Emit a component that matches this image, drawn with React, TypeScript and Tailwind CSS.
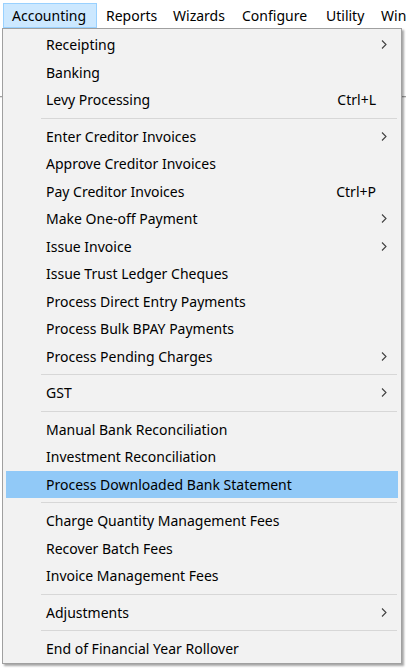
import React from 'react';

type Item =
  | { kind: 'item'; label: string; shortcut?: string; sub?: boolean; active?: boolean }
  | { kind: 'sep' };

const items: Item[] = [
  { kind: 'item', label: 'Receipting', sub: true },
  { kind: 'item', label: 'Banking' },
  { kind: 'item', label: 'Levy Processing', shortcut: 'Ctrl+L' },
  { kind: 'sep' },
  { kind: 'item', label: 'Enter Creditor Invoices', sub: true },
  { kind: 'item', label: 'Approve Creditor Invoices' },
  { kind: 'item', label: 'Pay Creditor Invoices', shortcut: 'Ctrl+P' },
  { kind: 'item', label: 'Make One-off Payment', sub: true },
  { kind: 'item', label: 'Issue Invoice', sub: true },
  { kind: 'item', label: 'Issue Trust Ledger Cheques' },
  { kind: 'item', label: 'Process Direct Entry Payments' },
  { kind: 'item', label: 'Process Bulk BPAY Payments' },
  { kind: 'item', label: 'Process Pending Charges', sub: true },
  { kind: 'sep' },
  { kind: 'item', label: 'GST', sub: true },
  { kind: 'sep' },
  { kind: 'item', label: 'Manual Bank Reconciliation' },
  { kind: 'item', label: 'Investment Reconciliation' },
  { kind: 'item', label: 'Process Downloaded Bank Statement', active: true },
  { kind: 'sep' },
  { kind: 'item', label: 'Charge Quantity Management Fees' },
  { kind: 'item', label: 'Recover Batch Fees' },
  { kind: 'item', label: 'Invoice Management Fees' },
  { kind: 'sep' },
  { kind: 'item', label: 'Adjustments', sub: true },
  { kind: 'sep' },
  { kind: 'item', label: 'End of Financial Year Rollover' },
];

const topMenus = [
  { label: 'Accounting', w: 'w-[94px]', open: true },
  { label: 'Reports', w: 'w-[67px]' },
  { label: 'Wizards', w: 'w-[69px]' },
  { label: 'Configure', w: 'w-[84px]' },
  { label: 'Utility', w: 'w-[55px]' },
  { label: 'Window', w: 'w-[70px]' },
];

function Chevron() {
  return (
    <svg width="6" height="9" viewBox="0 0 6 9">
      <path d="M1 0.5 L5 4.5 L1 8.5" fill="none" stroke="#404040" strokeWidth="1.1" />
    </svg>
  );
}

export default function App() {
  return (
    <div
      className="relative w-[406px] h-[668px] overflow-hidden bg-white text-black"
      style={{ fontFamily: '"Noto Sans", "Open Sans", sans-serif' }}
    >
      {/* Menu bar */}
      <div className="flex h-[28px] pl-[3px] pt-[3px] text-[14px] whitespace-nowrap overflow-hidden">
        {topMenus.map((m) => (
          <div
            key={m.label}
            className={`${m.w} shrink-0 h-[25px] flex items-center pl-[8px] ${
              m.open ? 'bg-[#cce8ff] border border-[#99d1ff]' : 'border border-transparent'
            }`}
          >
            {m.label}
          </div>
        ))}
      </div>

      {/* window underneath */}
      <div className="mt-[68px] h-[2px] border-t border-[#a0a0a0] bg-[#e3e3e3]" />

      {/* Dropdown */}
      <div className="absolute left-[2px] top-[28px] w-[400px] h-[636px] bg-[#f2f2f2] border border-[#a0a0a0] shadow-[2px_2px_2px_rgba(0,0,0,0.35)] pt-[2px] px-[3px] text-[14px]">
        {items.map((it, i) =>
          it.kind === 'sep' ? (
            <div key={i} className="h-[9px] flex items-center pl-[35px] pr-[1px]">
              <div className="h-px w-full bg-[#d7d7d7]" />
            </div>
          ) : (
            <div
              key={i}
              className={`h-[27.5px] flex items-center pl-[40px] ${it.active ? 'bg-[#91c9f7]' : ''}`}
            >
              <span className="flex-1">{it.label}</span>
              {it.shortcut && <span>{it.shortcut}</span>}
              <span className="w-[22px] pl-[5px] flex items-center">{it.sub && <Chevron />}</span>
            </div>
          )
        )}
      </div>
    </div>
  );
}
